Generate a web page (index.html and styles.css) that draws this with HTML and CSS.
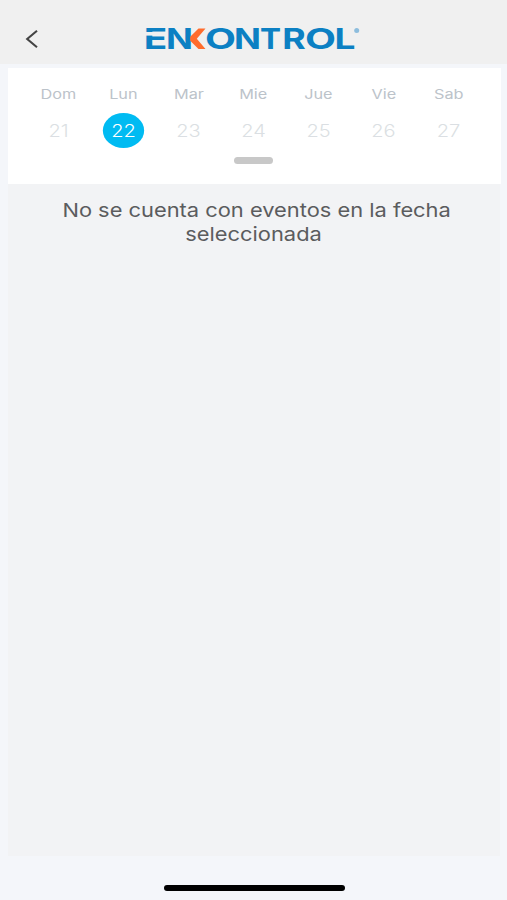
FILE: index.html
```html
<!DOCTYPE html>
<html lang="es">
<head>
    <meta charset="UTF-8">
    <meta name="viewport" content="width=device-width, initial-scale=1.0">
    <title>Enkontrol</title>
    <link rel="stylesheet" href="styles.css">
</head>
<body>
    <header class="header">
        <svg class="back" width="14" height="20" viewBox="0 0 14 20">
            <path d="M12 1.8 L2.2 10 L12 18.2"/>
        </svg>
        <svg class="logo" width="224" height="42" viewBox="-2 -4 224 42">
            <g class="logo-text">
                <text x="-1.2" y="27" textLength="23.5" lengthAdjust="spacingAndGlyphs">E</text>
                <text x="21" y="27" textLength="27" lengthAdjust="spacingAndGlyphs">N</text>
                <text x="60" y="27" textLength="31" lengthAdjust="spacingAndGlyphs">O</text>
                <text x="89" y="27" textLength="27" lengthAdjust="spacingAndGlyphs">N</text>
                <text x="115" y="27" textLength="21" lengthAdjust="spacingAndGlyphs">T</text>
                <text x="137.3" y="27" textLength="23.5" lengthAdjust="spacingAndGlyphs">R</text>
                <text x="160" y="27" textLength="31" lengthAdjust="spacingAndGlyphs">O</text>
                <text x="189.5" y="27" textLength="21" lengthAdjust="spacingAndGlyphs">L</text>
            </g>
            <rect class="logo-cut" x="0" y="10" width="10" height="3.6"/>
            <path class="logo-arrow" d="M53.5 6.6 H60.5 L51.8 16.8 L60.5 27 H53.5 L45.2 18.8 V14.8 Z"/>
            <circle class="logo-mark" cx="211.7" cy="8.5" r="2.5"/>
        </svg>
    </header>

    <section class="calendar">
        <div class="week">
            <div class="day"><span class="name">Dom</span><span class="number">21</span></div>
            <div class="day active"><span class="name">Lun</span><span class="number">22</span></div>
            <div class="day"><span class="name">Mar</span><span class="number">23</span></div>
            <div class="day"><span class="name">Mie</span><span class="number">24</span></div>
            <div class="day"><span class="name">Jue</span><span class="number">25</span></div>
            <div class="day"><span class="name">Vie</span><span class="number">26</span></div>
            <div class="day"><span class="name">Sab</span><span class="number">27</span></div>
        </div>
        <div class="knob"></div>
    </section>

    <main class="events">
        <p class="message">&nbsp;No se cuenta con eventos en la fecha<br>seleccionada</p>
    </main>

    <div class="home-bar"></div>
</body>
</html>
```
FILE: styles.css
```css
* {
    box-sizing: border-box;
}
body {
    font-family: Inter, "Liberation Sans", sans-serif;
    background-color: #f4f6fa;
    margin: 0;
    height: 900px;
    overflow: hidden;
    display: flex;
    flex-direction: column;
}
.header {
    background-color: #f0f0f0;
    height: 64px;
    padding: 18px 0 0 25px;
    display: flex;
    align-items: flex-start;
}
.back {
    margin-top: 11px;
}
.back path {
    fill: none;
    stroke: #444;
    stroke-width: 2.1;
}
.logo {
    margin-left: 104px;
}
.logo-text {
    font-size: 28px;
    font-weight: 700;
    fill: #0c80c3;
}
.logo-cut {
    fill: #f0f0f0;
}
.logo-arrow {
    fill: #ff6c2c;
}
.logo-mark {
    fill: #8dbddd;
}

/* calendario */
.calendar {
    background-color: #fff;
    height: 116px;
    margin: 4px 6px 0 8px;
    padding: 18px 20px 0 18px;
    display: flex;
    flex-direction: column;
    align-items: center;
}
.week {
    display: flex;
    width: 100%;
}
.day {
    flex: 1;
    display: flex;
    flex-direction: column;
    align-items: center;
}
.name {
    font-size: 13px;
    line-height: 16px;
    color: #bcc3ca;
    transform: scaleX(1.25);
}
.number {
    width: 35px;
    height: 35px;
    margin-top: 11px;
    line-height: 36px;
    font-size: 17px;
    font-weight: 300;
    text-align: center;
    color: #dbdfe3;
    border-radius: 50%;
    transform: scaleX(1.18);
}
.active .number {
    background-color: #00bbf2;
    color: #fff;
}
.knob {
    width: 39px;
    height: 7px;
    margin-top: 9px;
    border-radius: 4px;
    background-color: #c8c8c8;
}

/* eventos */
.events {
    background-color: #f2f3f5;
    height: 672px;
    margin: 0 7px 0 8px;
    display: flex;
    justify-content: center;
    align-items: flex-start;
}
.message {
    margin: 15px 0 0;
    font-size: 19px;
    line-height: 24px;
    text-align: center;
    white-space: nowrap;
    color: #5b5c5e;
    transform: scaleX(1.15);
}
.home-bar {
    width: 181px;
    height: 6px;
    margin: 29px 0 0 164px;
    border-radius: 3px;
    background-color: #000;
}
```
